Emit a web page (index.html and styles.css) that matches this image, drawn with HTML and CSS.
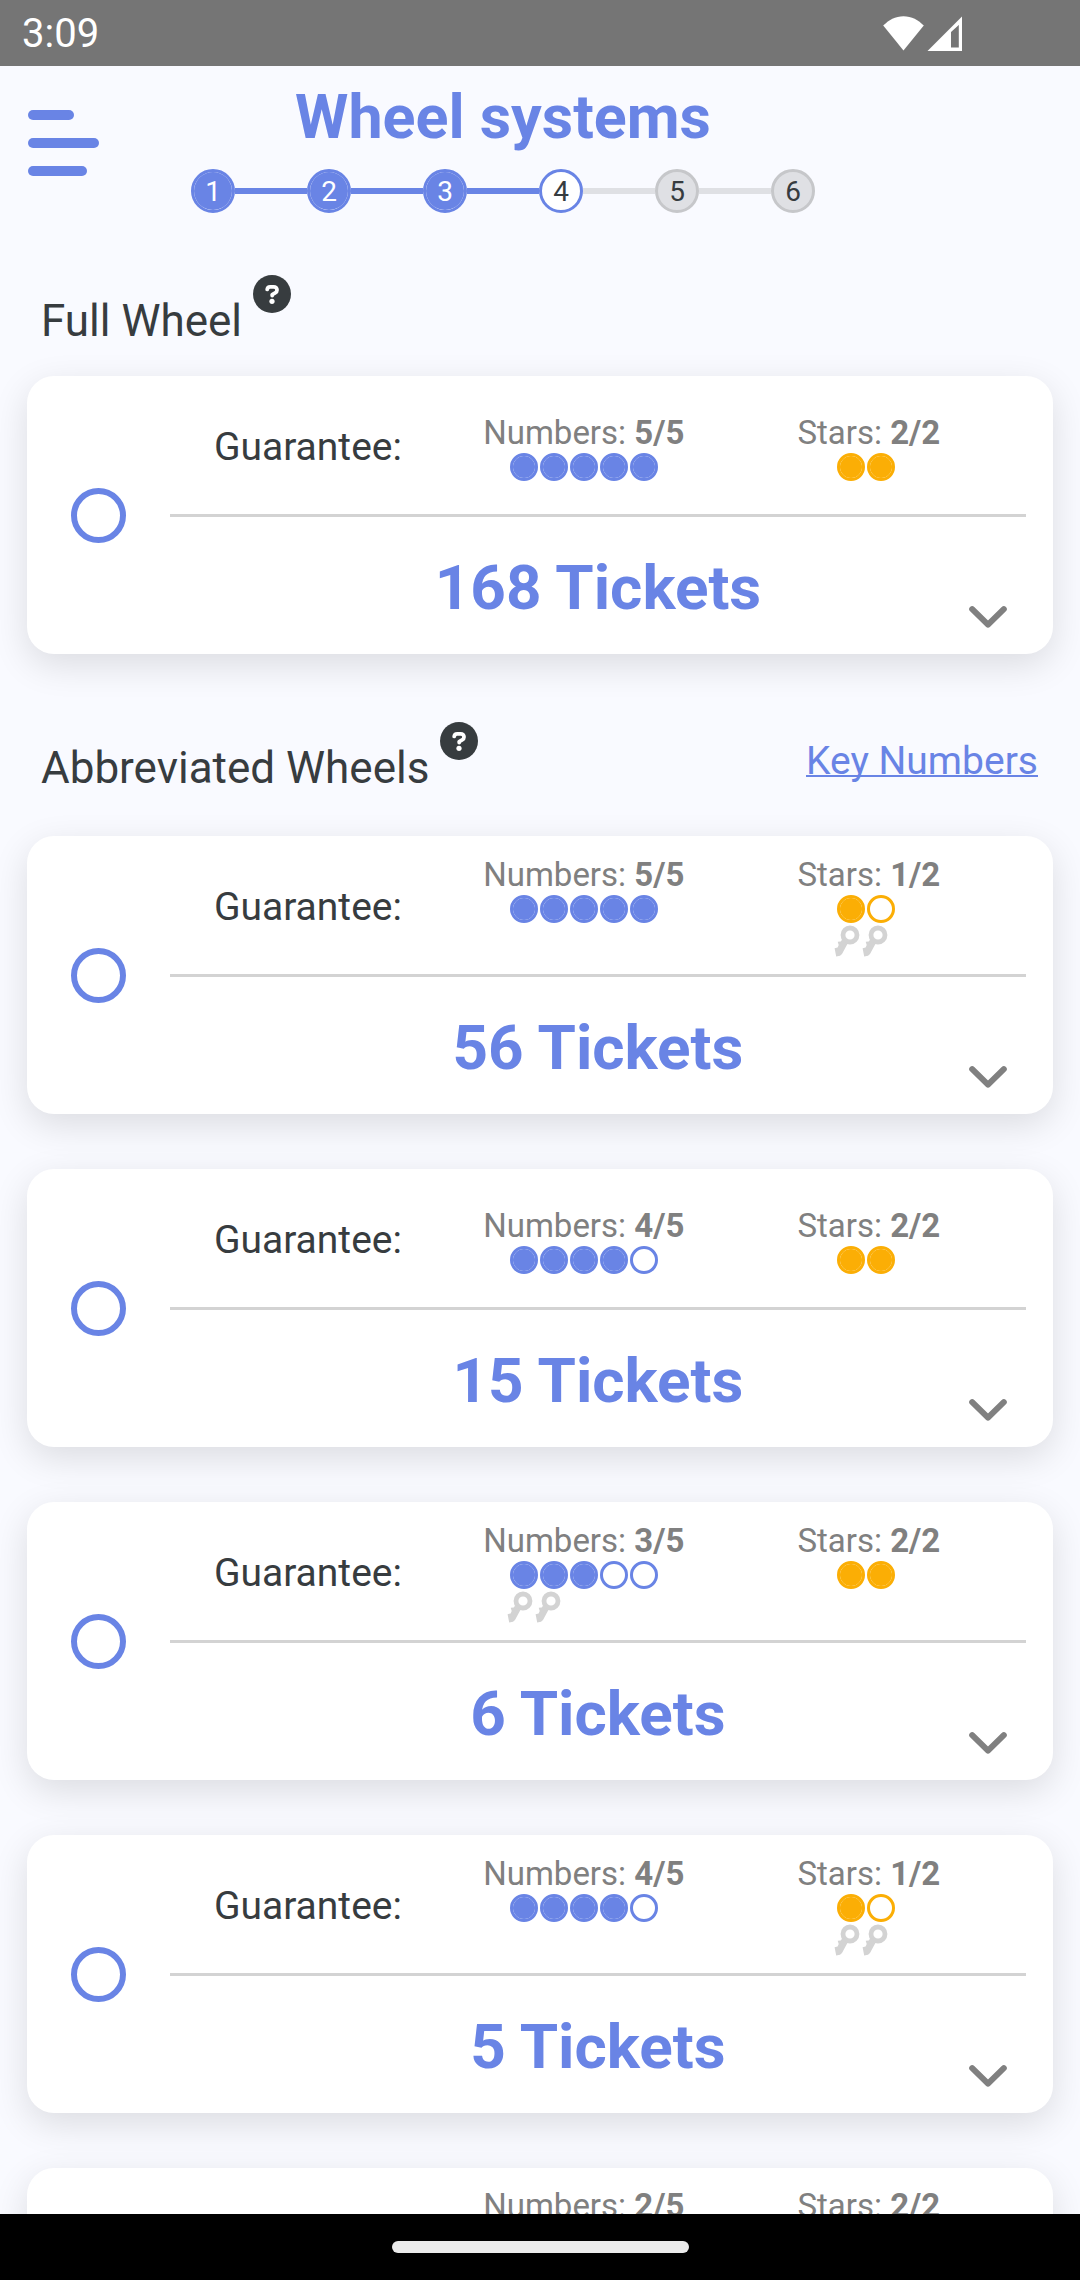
FILE: index.html
```html
<!DOCTYPE html>
<html lang="en">
<head>
  <meta charset="utf-8">
  <meta name="viewport" content="width=device-width, initial-scale=1">
  <title>Wheel systems</title>
  <link rel="stylesheet" href="styles.css">
</head>
<body>
  <svg class="sprite" aria-hidden="true">
    <symbol id="key" viewBox="0 0 28 36">
      <circle cx="13" cy="12" r="7" fill="none" stroke="currentColor" stroke-width="4.8"/>
      <path fill="currentColor" d="M6 15.5L3.7 18.5L0.7 18.8L1.7 22L0.6 24.4L-2.4 25.2L-0.8 33.4L3 32.8L5 31L10.4 21Z"/>
    </symbol>
    <symbol id="chevron" viewBox="0 0 38 22">
      <path fill="none" stroke="currentColor" stroke-width="6" stroke-linecap="round" stroke-linejoin="round" d="M3.2 3.2L19 18.6L34.8 3.2"/>
    </symbol>
    <symbol id="help" viewBox="0 0 38 38">
      <circle cx="19" cy="19" r="19" fill="#373c3f"/>
      <path fill="none" stroke="#fff" stroke-width="3.8" stroke-linecap="round" stroke-linejoin="round" d="M14.2 14.4C14.4 12.8 15.4 11.8 17.2 11.8H20.6C22.6 11.8 24 13.2 24 15C24 16.4 23.3 17.3 22.2 17.9L19.2 19.6V20.6"/>
      <circle cx="19" cy="26.3" r="2.6" fill="#fff"/>
    </symbol>
  </svg>

  <div class="statusbar">
    <time>3:09</time>
    <svg class="statusbar-icons" viewBox="0 0 80 36" aria-hidden="true">
      <path fill="#fff" d="M20.5 34.5L0.2 9.6C5.5 4 12.5 0.2 20.5 0.2S35.500 4 40.800 9.600Z"/>
      <path fill="#fff" fill-rule="evenodd" d="M44.500 35L79 0.500V35ZM68 16V31.500H75.800V9Z"/>
    </svg>
  </div>

  <header class="topbar">
    <button class="menu" type="button" aria-label="Open menu">
      <svg viewBox="0 0 71 66" aria-hidden="true">
        <rect width="46" height="10" rx="5"/>
        <rect y="28" width="71" height="10" rx="5"/>
        <rect y="56" width="59" height="10" rx="5"/>
      </svg>
    </button>
    <div class="heading">
      <h1>Wheel systems</h1>
      <ol class="steps">
        <li class="done"><span>1</span></li>
        <li class="done"><span>2</span></li>
        <li class="done"><span>3</span></li>
        <li class="current" aria-current="step"><span>4</span></li>
        <li><span>5</span></li>
        <li><span>6</span></li>
      </ol>
    </div>
  </header>

  <main>
    <section class="group">
      <div class="group-head">
        <h2>Full Wheel</h2>
        <button class="help" type="button" aria-label="About full wheels"><svg><use href="#help"/></svg></button>
      </div>
      <article class="card">
        <input type="radio" name="wheel" id="w168" aria-label="168 Tickets">
        <div class="card-body">
          <div class="guarantee">
            <label for="w168">Guarantee:</label>
            <div class="scores">
              <div class="score">
                <p>Numbers: <b>5/5</b></p>
                <div class="marks"><div class="dots"><i class="on"></i><i class="on"></i><i class="on"></i><i class="on"></i><i class="on"></i></div></div>
              </div>
              <div class="score stars">
                <p>Stars: <b>2/2</b></p>
                <div class="marks"><div class="dots"><i class="on"></i><i class="on"></i></div></div>
              </div>
            </div>
          </div>
          <div class="tickets">
            <strong>168 Tickets</strong>
            <button class="expand" type="button" aria-label="Show details"><svg><use href="#chevron"/></svg></button>
          </div>
        </div>
      </article>
    </section>

    <section class="group abbreviated">
      <div class="group-head">
        <h2>Abbreviated Wheels</h2>
        <button class="help" type="button" aria-label="About abbreviated wheels"><svg><use href="#help"/></svg></button>
        <a href="#key-numbers">Key Numbers</a>
      </div>
      <article class="card">
        <input type="radio" name="wheel" id="w56" aria-label="56 Tickets">
        <div class="card-body">
          <div class="guarantee">
            <label for="w56">Guarantee:</label>
            <div class="scores">
              <div class="score">
                <p>Numbers: <b>5/5</b></p>
                <div class="marks"><div class="dots"><i class="on"></i><i class="on"></i><i class="on"></i><i class="on"></i><i class="on"></i></div></div>
              </div>
              <div class="score stars">
                <p>Stars: <b>1/2</b></p>
                <div class="marks"><div class="dots"><i class="on"></i><i></i></div><div class="keys"><svg><use href="#key"/></svg><svg><use href="#key"/></svg></div></div>
              </div>
            </div>
          </div>
          <div class="tickets">
            <strong>56 Tickets</strong>
            <button class="expand" type="button" aria-label="Show details"><svg><use href="#chevron"/></svg></button>
          </div>
        </div>
      </article>
      <article class="card">
        <input type="radio" name="wheel" id="w15" aria-label="15 Tickets">
        <div class="card-body">
          <div class="guarantee">
            <label for="w15">Guarantee:</label>
            <div class="scores">
              <div class="score">
                <p>Numbers: <b>4/5</b></p>
                <div class="marks"><div class="dots"><i class="on"></i><i class="on"></i><i class="on"></i><i class="on"></i><i></i></div></div>
              </div>
              <div class="score stars">
                <p>Stars: <b>2/2</b></p>
                <div class="marks"><div class="dots"><i class="on"></i><i class="on"></i></div></div>
              </div>
            </div>
          </div>
          <div class="tickets">
            <strong>15 Tickets</strong>
            <button class="expand" type="button" aria-label="Show details"><svg><use href="#chevron"/></svg></button>
          </div>
        </div>
      </article>
      <article class="card">
        <input type="radio" name="wheel" id="w6" aria-label="6 Tickets">
        <div class="card-body">
          <div class="guarantee">
            <label for="w6">Guarantee:</label>
            <div class="scores">
              <div class="score">
                <p>Numbers: <b>3/5</b></p>
                <div class="marks"><div class="dots"><i class="on"></i><i class="on"></i><i class="on"></i><i></i><i></i></div><div class="keys"><svg><use href="#key"/></svg><svg><use href="#key"/></svg></div></div>
              </div>
              <div class="score stars">
                <p>Stars: <b>2/2</b></p>
                <div class="marks"><div class="dots"><i class="on"></i><i class="on"></i></div></div>
              </div>
            </div>
          </div>
          <div class="tickets">
            <strong>6 Tickets</strong>
            <button class="expand" type="button" aria-label="Show details"><svg><use href="#chevron"/></svg></button>
          </div>
        </div>
      </article>
      <article class="card">
        <input type="radio" name="wheel" id="w5" aria-label="5 Tickets">
        <div class="card-body">
          <div class="guarantee">
            <label for="w5">Guarantee:</label>
            <div class="scores">
              <div class="score">
                <p>Numbers: <b>4/5</b></p>
                <div class="marks"><div class="dots"><i class="on"></i><i class="on"></i><i class="on"></i><i class="on"></i><i></i></div></div>
              </div>
              <div class="score stars">
                <p>Stars: <b>1/2</b></p>
                <div class="marks"><div class="dots"><i class="on"></i><i></i></div><div class="keys"><svg><use href="#key"/></svg><svg><use href="#key"/></svg></div></div>
              </div>
            </div>
          </div>
          <div class="tickets">
            <strong>5 Tickets</strong>
            <button class="expand" type="button" aria-label="Show details"><svg><use href="#chevron"/></svg></button>
          </div>
        </div>
      </article>
      <article class="card cut">
        <div class="card-body">
          <div class="guarantee">
            <span></span>
            <div class="scores">
              <div class="score">
                <p>Numbers: <b>2/5</b></p>
              </div>
              <div class="score stars">
                <p>Stars: <b>2/2</b></p>
              </div>
            </div>
          </div>
        </div>
      </article>
    </section>
  </main>

  <footer class="navbar"><span></span></footer>
</body>
</html>
```
FILE: styles.css
```css
:root {
  --blue: #6984e5;
  --orange: #fbae05;
  --ink: #373c3f;
  --grey: #808080;
  --line: #d3d3d3;
  --page: #f9faff;
}

* {
  box-sizing: border-box;
}

body {
  display: flex;
  flex-direction: column;
  height: 100vh;
  margin: 0;
  overflow: hidden;
  background: var(--page);
  color: var(--ink);
  font-family: Roboto, sans-serif;
}

h1, h2, p, ol {
  margin: 0;
  padding: 0;
}

button {
  padding: 0;
  border: 0;
  background: none;
  color: inherit;
  cursor: pointer;
}

svg {
  display: block;
}

.sprite {
  display: none;
}

/* System status bar */
.statusbar {
  display: flex;
  flex: none;
  align-items: center;
  justify-content: space-between;
  height: 66px;
  padding: 2px 117px 0 22px;
  background: #757575;
  color: #fff;
  font-size: 40px;
  line-height: 48px;
}

.statusbar-icons {
  width: 80px;
  height: 36px;
}

/* Title and progress */
.topbar {
  display: grid;
  flex: none;
  grid-template-columns: 72px 1fr 146px;
  align-items: start;
  padding: 15px 28px 0;
}

.menu {
  display: flex;
  align-items: center;
  height: 124px;
}

.menu svg {
  width: 71px;
  height: 66px;
  fill: var(--blue);
}

.heading {
  display: flex;
  flex-direction: column;
  align-items: center;
  gap: 16px;
}

h1 {
  color: var(--blue);
  font-size: 61px;
  font-weight: 700;
  line-height: 72px;
}

.steps {
  display: flex;
  list-style: none;
}

.steps li {
  display: flex;
  align-items: center;
}

.steps li + li::before {
  width: 72px;
  height: 6px;
  background: #dfe0e4;
  content: "";
}

.steps li.done + li::before {
  background: var(--blue);
}

.steps span {
  width: 44px;
  height: 44px;
  border: 3px solid #c6c7ca;
  border-radius: 50%;
  background: #dfe0e4;
  font-size: 28px;
  line-height: 40px;
  text-align: center;
}

.steps .done span {
  border-color: var(--blue);
  background: var(--blue) padding-box;
  color: #fff;
}

.steps .current span {
  border-color: var(--blue);
  background: #fff;
}

/* Wheel groups */
main {
  flex: 1;
  min-height: 0;
  padding: 62px 27px 0;
  overflow: hidden;
}

.group-head {
  display: flex;
  align-items: flex-start;
  gap: 11px;
  margin-bottom: 30px;
  padding: 0 15px 0 14px;
}

h2 {
  margin-top: 21px;
  font-size: 44px;
  font-weight: 400;
  line-height: 50px;
}

.help svg {
  width: 38px;
  height: 38px;
}

.group-head a {
  margin: 16px 0 0 auto;
  color: var(--blue);
  font-size: 39px;
  line-height: 46px;
  text-decoration-thickness: 2px;
  text-decoration-skip-ink: none;
}

.abbreviated {
  display: flex;
  flex-direction: column;
  gap: 55px;
  margin-top: 68px;
}

.abbreviated .group-head {
  margin-bottom: -12px;
}

/* Cards */
.card {
  display: flex;
  align-items: center;
  gap: 44px;
  min-height: 278px;
  padding: 0 27px 0 44px;
  border-radius: 27px;
  background: #fff;
  box-shadow: 0 11px 36px rgba(0, 0, 0, 0.12);
}

.card input {
  flex: none;
  width: 55px;
  height: 55px;
  margin: 0;
  border: 6px solid var(--blue);
  border-radius: 50%;
  appearance: none;
}

.card input:checked {
  background: var(--blue) content-box;
  padding: 8px;
}

.card-body {
  flex: 1;
}

.guarantee {
  display: grid;
  grid-template-columns: 15fr 31fr;
  align-items: center;
  height: 141px;
  padding: 4px 10px 0 0;
  border-bottom: 3px solid var(--line);
}

.guarantee label {
  justify-self: center;
  font-size: 39px;
  line-height: 46px;
}

.scores {
  display: grid;
  grid-template-columns: 15fr 16fr;
  align-items: start;
}

.score {
  display: flex;
  flex-direction: column;
  align-items: center;
  color: var(--grey);
  font-size: 33px;
  line-height: 40px;
}

.stars .marks {
  padding-right: 6px;
}

.dots {
  display: flex;
  gap: 2px;
  color: var(--blue);
}

.stars .dots {
  color: var(--orange);
}

.dots i {
  width: 28px;
  height: 28px;
  border: 3px solid currentColor;
  border-radius: 50%;
}

.dots .on {
  background: currentColor padding-box;
}

.keys {
  display: flex;
  height: 36px;
  color: var(--line);
}

.keys svg {
  width: 28px;
  height: 36px;
  overflow: visible;
}

#key {
  overflow: visible;
}

.tickets {
  display: grid;
  grid-template-columns: 1fr auto 1fr;
  align-items: center;
  height: 137px;
  padding-top: 4px;
}

.tickets strong {
  grid-column: 2;
  color: var(--blue);
  font-size: 62px;
  line-height: 72px;
}

.expand {
  align-self: end;
  justify-self: end;
  padding: 0 19px 26px 0;
  color: var(--grey);
}

.expand svg {
  width: 38px;
  height: 22px;
}

/* Last row runs on below the fold */
.cut .card-body {
  align-self: flex-start;
  padding-left: 99px;
}

.cut .guarantee {
  align-items: start;
  padding-top: 18px;
}

/* System navigation bar */
.navbar {
  display: flex;
  flex: none;
  align-items: center;
  justify-content: center;
  height: 66px;
  background: #000;
}

.navbar span {
  width: 297px;
  height: 12px;
  border-radius: 6px;
  background: #ebebeb;
}
```
